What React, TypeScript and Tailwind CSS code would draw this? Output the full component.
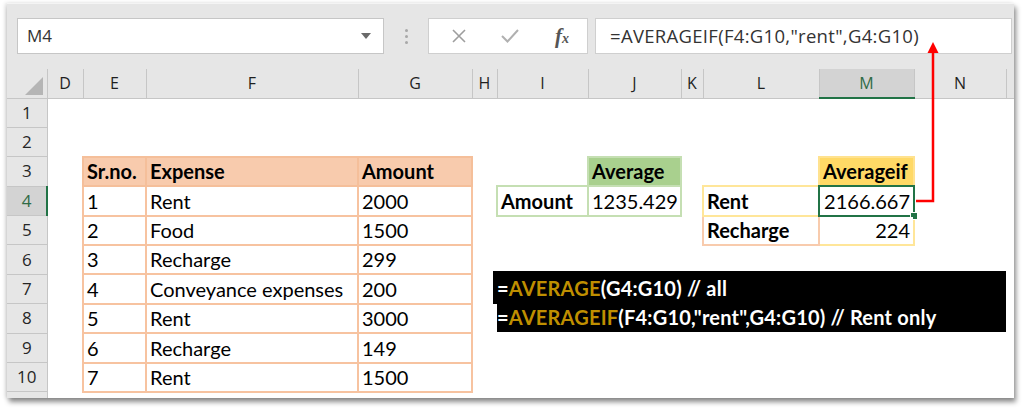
import React from "react";

type Cell = {
  t?: React.ReactNode;
  cls?: string;
  right?: boolean;
  bold?: boolean;
  sel?: boolean;
};

const colWidths = [
  "w-[40px]",
  "w-[36px]",
  "w-[63px]",
  "w-[212px]",
  "w-[114px]",
  "w-[25px]",
  "w-[91px]",
  "w-[93px]",
  "w-[22px]",
  "w-[116px]",
  "w-[95px]",
  "w-[92px]",
  "w-[8px]",
];

const letters = ["", "D", "E", "F", "G", "H", "I", "J", "K", "L", "M", "N", ""];

const OH = "bg-[#f8cbad] border-2 border-[#f5bf9a]";
const OC = "bg-white border-2 border-[#f7c3a0]";
const GH = "bg-[#a9d08e] border-2 border-[#c5dfb3]";
const GC = "bg-white border-2 border-[#c5dfb3]";
const YH = "bg-[#ffd966] border-2 border-[#ffe28f]";
const YC = "bg-white border-2 border-[#ffe699]";
const PC = "bg-white border-2 border-[#f8cbad]";

function tableRow(n: string, exp: string, amt: string): Record<number, Cell> {
  return {
    2: { t: n, cls: OC },
    3: { t: exp, cls: OC },
    4: { t: amt, cls: OC },
  };
}

const rows: Record<number, Cell>[] = [
  {},
  {},
  {
    2: { t: "Sr.no.", cls: OH, bold: true },
    3: { t: "Expense", cls: OH, bold: true },
    4: { t: "Amount", cls: OH, bold: true },
    7: { t: "Average", cls: GH, bold: true },
    10: { t: "Averageif", cls: YH, bold: true },
  },
  {
    ...tableRow("1", "Rent", "2000"),
    6: { t: "Amount", cls: GC, bold: true },
    7: { t: "1235.429", cls: GC, right: true },
    9: { t: "Rent", cls: YC, bold: true },
    10: { t: "2166.667", cls: YC, right: true, sel: true },
  },
  {
    ...tableRow("2", "Food", "1500"),
    9: { t: "Recharge", cls: PC, bold: true },
    10: { t: "224", cls: YC, right: true },
  },
  tableRow("3", "Recharge", "299"),
  tableRow("4", "Conveyance expenses", "200"),
  tableRow("5", "Rent", "3000"),
  tableRow("6", "Recharge", "149"),
  tableRow("7", "Rent", "1500"),
  {},
];

function BlackBox() {
  return (
    <div className="bg-black h-[61px] w-[513px] -ml-[4px] -mt-[3px] flex flex-col font-['Lato',sans-serif] font-bold text-[20px] tracking-[0.2px] text-white pl-[4px] pt-[1px]">
      <div className="h-[29.5px] flex items-end pb-[3px] leading-[22px] whitespace-nowrap">
        <span>=</span>
        <span className="text-[#bf8f00]">AVERAGE</span>
        <span>(G4:G10) // all</span>
      </div>
      <div className="h-[29.5px] flex items-end pb-[3px] leading-[22px] whitespace-nowrap">
        <span>=</span>
        <span className="text-[#bf8f00]">AVERAGEIF</span>
        <span>(F4:G10,"rent",G4:G10) // Rent only</span>
      </div>
    </div>
  );
}

function Sheet() {
  return (
    <div className="h-[330px] overflow-hidden bg-white">
      <table className="table-fixed border-collapse w-[1007px]">
        <colgroup>
          {colWidths.map((w, i) => (
            <col key={i} className={w} />
          ))}
        </colgroup>
        <tbody>
          <tr className="h-[29px]">
            {letters.map((l, i) => {
              if (i === 0) {
                return (
                  <td
                    key={i}
                    className="p-0 bg-[#e6e6e6] border-r border-b border-[#c6c6c6] align-bottom"
                  >
                    <div className="flex justify-end pr-[4px] pb-[3px]">
                      <svg width="18" height="18" viewBox="0 0 18 18">
                        <polygon points="18,0 18,18 0,18" fill="#b5b5b5" />
                      </svg>
                    </div>
                  </td>
                );
              }
              const isM = l === "M";
              return (
                <td
                  key={i}
                  className={
                    isM
                      ? "p-0 bg-[#d3d3d3] border-r border-r-[#c6c6c6] border-b-2 border-b-[#217346] text-center text-[#2f6b46] font-['Open_Sans',sans-serif] text-[16px]"
                      : i === 12
                      ? "p-0 bg-[#e6e6e6] border-b border-[#c6c6c6]"
                      : "p-0 bg-[#e6e6e6] border-r border-b border-[#c6c6c6] text-center text-[#1f1f1f] font-['Open_Sans',sans-serif] font-medium text-[16px]"
                  }
                >
                  {l}
                </td>
              );
            })}
          </tr>
          {rows.map((r, ri) => {
            const rowNum = ri + 1;
            const selRow = rowNum === 4;
            return (
              <tr key={ri} className="h-[29.4px]">
                <td
                  className={
                    selRow
                      ? "p-0 bg-[#d3d3d3] border-b border-b-[#c6c6c6] border-r-2 border-r-[#217346] text-center text-[#2f6b46] font-['Open_Sans',sans-serif] text-[17px] leading-[28px]"
                      : "p-0 bg-[#e6e6e6] border-b border-r border-[#c6c6c6] text-center text-[#262626] font-['Open_Sans',sans-serif] text-[17px] leading-[28px]"
                  }
                >
                  {rowNum}
                </td>
                {letters.slice(1).map((_, ci0) => {
                  const ci = ci0 + 1;
                  if (rowNum === 7 && ci === 6) {
                    return (
                      <td key={ci} colSpan={7} rowSpan={2} className="p-0 align-top bg-white">
                        <BlackBox />
                      </td>
                    );
                  }
                  if ((rowNum === 7 || rowNum === 8) && ci >= 6) return null;
                  const c = r[ci];
                  if (!c) return <td key={ci} className="p-0 bg-white" />;
                  return (
                    <td
                      key={ci}
                      className={
                        "p-0 align-bottom relative font-['Lato',sans-serif] text-[20px] text-black " +
                        (c.cls ?? "") +
                        (c.bold ? " font-bold" : "")
                      }
                    >
                      <div
                        className={
                          c.right
                            ? "px-[3px] pb-[3px] leading-[22px] whitespace-nowrap text-right"
                            : "px-[3px] pb-[3px] leading-[22px] whitespace-nowrap"
                        }
                      >
                        {c.t}
                      </div>
                      {c.sel && (
                        <div className="absolute -inset-[2px] border-2 border-[#217346] pointer-events-none">
                          <div className="absolute -right-[5px] -bottom-[5px] w-[8px] h-[8px] bg-[#217346] border border-white" />
                        </div>
                      )}
                    </td>
                  );
                })}
              </tr>
            );
          })}
        </tbody>
      </table>
    </div>
  );
}

function TopBar() {
  return (
    <div className="h-[65px] flex items-start pt-[14px] pl-[10px]">
      <div className="w-[367px] h-[36px] bg-white border border-[#c6c6c6] flex items-center justify-between pl-[9px] pr-[12px]">
        <span className="font-['Open_Sans',sans-serif] text-[17px] text-[#333]">M4</span>
        <svg width="10" height="6" viewBox="0 0 10 6">
          <polygon points="0,0 10,0 5,6" fill="#6a6a6a" />
        </svg>
      </div>
      <div className="w-[44px] h-[36px] flex flex-col items-center justify-center gap-[3px]">
        <div className="w-[3px] h-[3px] rounded-full bg-[#a8a8a8]" />
        <div className="w-[3px] h-[3px] rounded-full bg-[#a8a8a8]" />
        <div className="w-[3px] h-[3px] rounded-full bg-[#a8a8a8]" />
      </div>
      <div className="w-[160px] h-[36px] bg-white border border-[#cfcfcf] flex items-center">
        <div className="w-[54px] flex justify-center pl-[6px]">
          <svg width="16" height="16" viewBox="0 0 16 16">
            <path d="M2 2 L14 14 M14 2 L2 14" stroke="#9e9e9e" strokeWidth="1.6" fill="none" />
          </svg>
        </div>
        <div className="w-[54px] flex justify-center">
          <svg width="18" height="16" viewBox="0 0 18 16">
            <path d="M1 8 L6.5 13.5 L17 2" stroke="#b0b0b0" strokeWidth="2" fill="none" />
          </svg>
        </div>
        <div className="w-[50px] flex justify-center">
          <span className="font-['Liberation_Serif',serif] italic font-bold text-[21px] text-[#555] leading-none">
            f<span className="text-[14px]">x</span>
          </span>
        </div>
      </div>
      <div className="ml-[7px] w-[417px] h-[36px] bg-white border border-[#cfcfcf] flex items-center pl-[14px]">
        <span className="font-['Open_Sans',sans-serif] text-[18.5px] tracking-[0.3px] text-[#333] whitespace-nowrap">
          =AVERAGEIF(F4:G10,"rent",G4:G10)
        </span>
      </div>
    </div>
  );
}

export default function App() {
  return (
    <div className="w-[1024px] h-[415px] bg-white overflow-hidden pt-[3px] pl-[7px]">
      <div className="relative w-[1007px] h-[395px] bg-[#e6e6e6] border-t border-[#f4f4f4] shadow-[2px_4px_5px_rgba(0,0,0,0.45),-2px_0_4px_rgba(0,0,0,0.12)] overflow-hidden">
        <TopBar />
        <Sheet />
        <svg
          className="absolute left-0 top-0 pointer-events-none"
          width="1007"
          height="395"
          viewBox="0 0 1007 395"
        >
          <path d="M909 197 L926 197 L926 47" stroke="#ff0000" strokeWidth="2.5" fill="none" />
          <polygon points="926,38 920.5,49 931.5,49" fill="#ff0000" />
        </svg>
      </div>
    </div>
  );
}
